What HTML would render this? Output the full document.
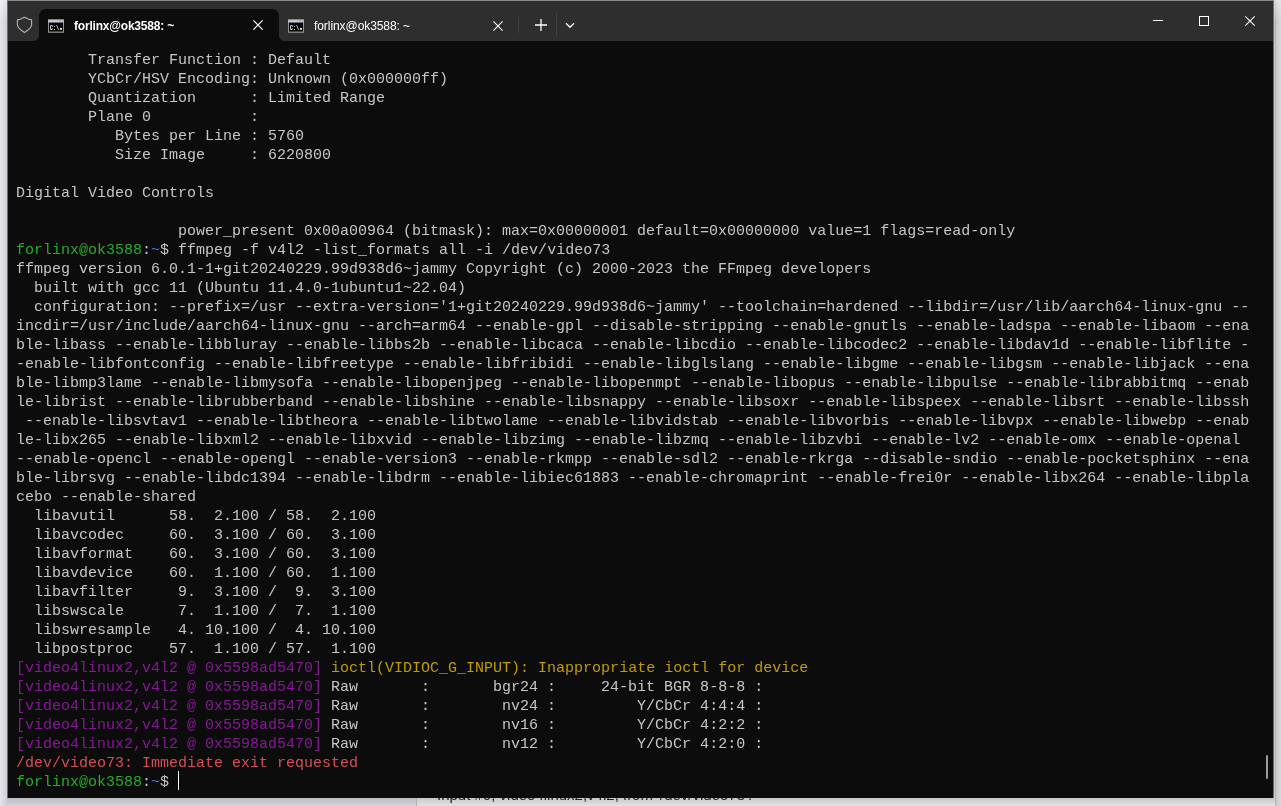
<!DOCTYPE html>
<html><head><meta charset="utf-8"><title>forlinx@ok3588: ~</title>
<style>
html,body{margin:0;padding:0}
body{width:1281px;height:806px;overflow:hidden;position:relative;background:#d8d8de;font-family:"Liberation Sans",sans-serif}
#ml{position:absolute;left:0;top:0;width:7px;height:806px;background:linear-gradient(90deg,#e5e5eb,#cfcdd5)}
#mr{position:absolute;left:1274px;top:0;width:7px;height:806px;background:linear-gradient(90deg,#c8c8c8 0,#c8c8c8 1px,#b5b5b8 1px,#b5b5b8 2px,#c8c8cc 2px,#d8d8de 7px)}
#ml:after,#mr:after{content:"";position:absolute;left:0;top:0;width:7px;height:22px;background:linear-gradient(180deg,rgba(255,255,255,.4),rgba(255,255,255,0))}
#mb{position:absolute;left:7px;top:798px;width:1267px;height:8px;background:linear-gradient(180deg,#bcbbc1,#d6d5dc)}
#under{position:absolute;left:416px;top:780px;width:858px;height:26px;background:linear-gradient(180deg,#c8c8c8 18px,#e4e4e4 26px);border-left:1px solid #b0b0b0;border-right:1px solid #b5b5b8;overflow:hidden}
#under span{position:absolute;left:20px;top:6px;font:15px/17px "Liberation Sans",sans-serif;color:#222;white-space:pre;will-change:transform}
#frame{position:absolute;left:7px;top:0;width:1267px;height:798px;background:linear-gradient(180deg,#8a8a8a 0,#8a8a8a 1px,#6b6b6b 1px)}
#win{position:absolute;left:8px;top:1px;width:1265px;height:797px;background:#0c0c0c}
#bar{position:absolute;left:0;top:0;width:100%;height:40px;background:#2e2e2e}
#tab1{position:absolute;left:31px;top:8px;width:240px;height:32px;background:#0c0c0c;border-radius:7px 7px 0 0}
#tab1:before,#tab1:after{content:"";position:absolute;bottom:0;width:5px;height:5px}
#tab1:before{left:-5px;background:radial-gradient(circle at 0 0,transparent 4.5px,#0c0c0c 5px)}
#tab1:after{right:-5px;background:radial-gradient(circle at 100% 0,transparent 4.5px,#0c0c0c 5px)}
.tt{will-change:transform;position:absolute;top:17px;font-size:12px;line-height:16px;color:#fff;white-space:pre}
#ic{position:absolute;left:-8px;top:-1px;will-change:transform}
#term{will-change:transform;position:absolute;left:8px;top:50px;font:15px/19px "Liberation Mono",monospace;color:#c6c6c6}
.ln{height:19px;white-space:pre}
.g{color:#24ae24}.b{color:#3b78ff}.p{color:#881798}.y{color:#c19c00}.r{color:#d84c59}
#cur{position:absolute;left:170px;top:770px;width:1px;height:19px;background:#fff}
#thumb{position:absolute;left:1258px;top:754px;width:2px;height:24px;background:#9c9c9c;border-radius:1px}
</style></head><body>
<div id="ml"></div><div id="mr"></div><div id="mb"></div>
<div id="under"><span>Input #0, video4linux2,v4l2, from '/dev/video73':</span></div>
<div id="frame"></div>
<div id="win">
<div id="bar">
 <div id="tab1"></div>
 <svg id="ic" width="1281" height="42" viewBox="0 0 1281 42">
  <defs>
   <g id="cmd">
    <rect x="0" y="0.500" width="16" height="13.300" fill="#909096"/>
    <rect x="0" y="0.500" width="16" height="3.100" fill="#a8acb6"/><rect x=".6" y="1" width="14.800" height="2.400" fill="#c6cad6"/>
    <rect x="1" y="3.600" width="14" height="8.900" fill="#000"/>
    <rect x="10.500" y="1.600" width="1" height="1" fill="#2d2d2d" opacity=".35"/><rect x="12.300" y="1.600" width="1" height="1" fill="#2d2d2d" opacity=".35"/><rect x="14" y="1.600" width="1" height="1" fill="#2d2d2d" opacity=".35"/>
    <text x="1.700" y="10.750" font-family="Liberation Mono,monospace" font-size="7.800" font-weight="bold" fill="#fff" textLength="9.600" lengthAdjust="spacingAndGlyphs">C:\</text>
    <rect x="12" y="9" width="2" height="1.800" fill="#e8e8e8"/>
   </g>
  </defs>
  <path d="M17.400 19.900 C19.800 19.700 21.600 18.900 22.700 17.900 Q24.500 16.700 26.300 17.900 C27.400 18.900 29.200 19.700 31.600 19.900 V25 C31.400 27.600 29 29.700 24.500 32.600 C20 29.700 17.600 27.600 17.400 25 Z" fill="none" stroke="#b0b0b0" stroke-width="1.150" stroke-linejoin="round"/>
  <use href="#cmd" x="48" y="19"/>
  <path d="M253.400 20.400L262.600 29.600M262.600 20.400L253.400 29.600" stroke="#fff" stroke-width="1.250" fill="none"/>
  <use href="#cmd" x="288" y="19"/>
  <path d="M493.400 21.400L502.600 30.600M502.600 21.400L493.400 30.600" stroke="#fff" stroke-width="1.100" fill="none"/>
  <rect x="518" y="17" width="1" height="16" fill="#414141"/>
  <path d="M541 19V31M535 25H547" stroke="#fff" stroke-width="1.300" fill="none"/>
  <rect x="556" y="13" width="1" height="24" fill="#414141"/>
  <path d="M566 23.300L570 27.300L574 23.300" fill="none" stroke="#fff" stroke-width="1.250"/>
  <rect x="1153" y="20" width="10" height="1" fill="#fff"/>
  <rect x="1199.500" y="16.500" width="9" height="9" fill="none" stroke="#fff" stroke-width="1"/>
  <path d="M1245.300 16.300L1254.700 25.700M1254.700 16.300L1245.300 25.700" stroke="#fff" stroke-width="1.100" fill="none"/>
 </svg>
 <div class="tt" style="left:66px;font-weight:bold;letter-spacing:-0.2px">forlinx@ok3588: ~</div>
 <div class="tt" style="left:306px;letter-spacing:-0.07px">forlinx@ok3588: ~</div>
</div>
<div id="term">
<div class="ln">        Transfer Function : Default</div>
<div class="ln">        YCbCr/HSV Encoding: Unknown (0x000000ff)</div>
<div class="ln">        Quantization      : Limited Range</div>
<div class="ln">        Plane 0           :</div>
<div class="ln">           Bytes per Line : 5760</div>
<div class="ln">           Size Image     : 6220800</div>
<div class="ln">&nbsp;</div>
<div class="ln">Digital Video Controls</div>
<div class="ln">&nbsp;</div>
<div class="ln">                  power_present 0x00a00964 (bitmask): max=0x00000001 default=0x00000000 value=1 flags=read-only</div>
<div class="ln"><span class="g">forlinx@ok3588</span>:<span class="b">~</span>$ ffmpeg -f v4l2 -list_formats all -i /dev/video73</div>
<div class="ln">ffmpeg version 6.0.1-1+git20240229.99d938d6~jammy Copyright (c) 2000-2023 the FFmpeg developers</div>
<div class="ln">  built with gcc 11 (Ubuntu 11.4.0-1ubuntu1~22.04)</div>
<div class="ln">  configuration: --prefix=/usr --extra-version=&#x27;1+git20240229.99d938d6~jammy&#x27; --toolchain=hardened --libdir=/usr/lib/aarch64-linux-gnu --</div>
<div class="ln">incdir=/usr/include/aarch64-linux-gnu --arch=arm64 --enable-gpl --disable-stripping --enable-gnutls --enable-ladspa --enable-libaom --ena</div>
<div class="ln">ble-libass --enable-libbluray --enable-libbs2b --enable-libcaca --enable-libcdio --enable-libcodec2 --enable-libdav1d --enable-libflite -</div>
<div class="ln">-enable-libfontconfig --enable-libfreetype --enable-libfribidi --enable-libglslang --enable-libgme --enable-libgsm --enable-libjack --ena</div>
<div class="ln">ble-libmp3lame --enable-libmysofa --enable-libopenjpeg --enable-libopenmpt --enable-libopus --enable-libpulse --enable-librabbitmq --enab</div>
<div class="ln">le-librist --enable-librubberband --enable-libshine --enable-libsnappy --enable-libsoxr --enable-libspeex --enable-libsrt --enable-libssh</div>
<div class="ln"> --enable-libsvtav1 --enable-libtheora --enable-libtwolame --enable-libvidstab --enable-libvorbis --enable-libvpx --enable-libwebp --enab</div>
<div class="ln">le-libx265 --enable-libxml2 --enable-libxvid --enable-libzimg --enable-libzmq --enable-libzvbi --enable-lv2 --enable-omx --enable-openal </div>
<div class="ln">--enable-opencl --enable-opengl --enable-version3 --enable-rkmpp --enable-sdl2 --enable-rkrga --disable-sndio --enable-pocketsphinx --ena</div>
<div class="ln">ble-librsvg --enable-libdc1394 --enable-libdrm --enable-libiec61883 --enable-chromaprint --enable-frei0r --enable-libx264 --enable-libpla</div>
<div class="ln">cebo --enable-shared</div>
<div class="ln">  libavutil      58.  2.100 / 58.  2.100</div>
<div class="ln">  libavcodec     60.  3.100 / 60.  3.100</div>
<div class="ln">  libavformat    60.  3.100 / 60.  3.100</div>
<div class="ln">  libavdevice    60.  1.100 / 60.  1.100</div>
<div class="ln">  libavfilter     9.  3.100 /  9.  3.100</div>
<div class="ln">  libswscale      7.  1.100 /  7.  1.100</div>
<div class="ln">  libswresample   4. 10.100 /  4. 10.100</div>
<div class="ln">  libpostproc    57.  1.100 / 57.  1.100</div>
<div class="ln"><span class="p">[video4linux2,v4l2 @ 0x5598ad5470]</span> <span class="y">ioctl(VIDIOC_G_INPUT): Inappropriate ioctl for device</span></div>
<div class="ln"><span class="p">[video4linux2,v4l2 @ 0x5598ad5470]</span> Raw       :       bgr24 :     24-bit BGR 8-8-8 :</div>
<div class="ln"><span class="p">[video4linux2,v4l2 @ 0x5598ad5470]</span> Raw       :        nv24 :         Y/CbCr 4:4:4 :</div>
<div class="ln"><span class="p">[video4linux2,v4l2 @ 0x5598ad5470]</span> Raw       :        nv16 :         Y/CbCr 4:2:2 :</div>
<div class="ln"><span class="p">[video4linux2,v4l2 @ 0x5598ad5470]</span> Raw       :        nv12 :         Y/CbCr 4:2:0 :</div>
<div class="ln"><span class="r">/dev/video73: Immediate exit requested</span></div>
<div class="ln"><span class="g">forlinx@ok3588</span>:<span class="b">~</span>$ </div>
</div>
<div id="cur"></div>
<div id="thumb"></div>
</div>
</body></html>
